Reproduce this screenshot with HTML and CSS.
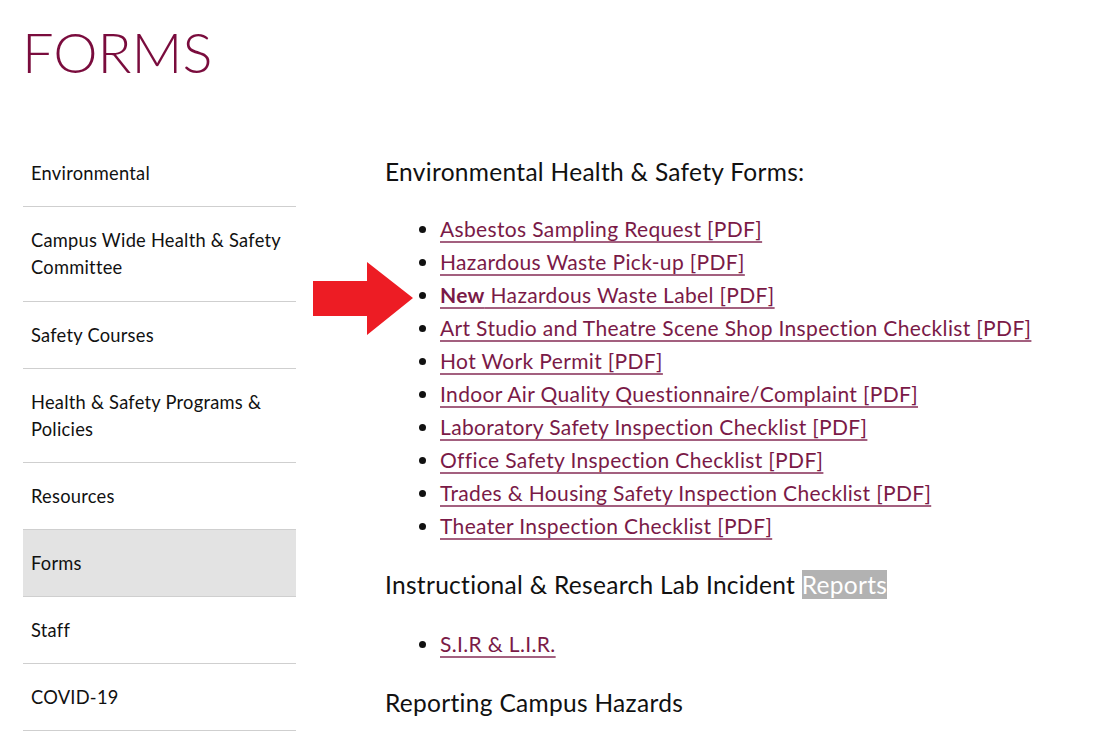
FILE: index.html
```html
<!DOCTYPE html>
<html lang="en">
<head>
<meta charset="utf-8">
<title>Forms</title>
<link rel="stylesheet" href="styles.css">
</head>
<body>
<div class="page">
  <h1 class="title">FORMS</h1>
  <div class="layout">
    <nav class="sidebar">
      <a class="nav-item" href="#">Environmental</a>
      <a class="nav-item two" href="#">Campus Wide Health &amp; Safety Committee</a>
      <a class="nav-item" href="#">Safety Courses</a>
      <a class="nav-item" href="#">Health &amp; Safety Programs &amp; Policies</a>
      <a class="nav-item" href="#">Resources</a>
      <a class="nav-item active" href="#">Forms</a>
      <a class="nav-item" href="#">Staff</a>
      <a class="nav-item" href="#">COVID-19</a>
    </nav>
    <main class="content">
      <h2 class="section-title first">Environmental Health &amp; Safety Forms:</h2>
      <ul class="links first-list">
        <li><a href="#">Asbestos Sampling Request [PDF]</a></li>
        <li><a href="#">Hazardous Waste Pick-up [PDF]</a></li>
        <li class="marked">
          <svg class="arrow" width="100" height="74" viewBox="0 0 100 74"><polygon points="0,19 54,19 54,0 100,36 54,73 54,54 0,54" fill="#ed1c24"/></svg>
          <a href="#"><strong>New</strong> Hazardous Waste Label [PDF]</a>
        </li>
        <li><a href="#">Art Studio and Theatre Scene Shop Inspection Checklist [PDF]</a></li>
        <li><a href="#">Hot Work Permit [PDF]</a></li>
        <li><a href="#">Indoor Air Quality Questionnaire/Complaint [PDF]</a></li>
        <li><a href="#">Laboratory Safety Inspection Checklist [PDF]</a></li>
        <li><a href="#">Office Safety Inspection Checklist [PDF]</a></li>
        <li><a href="#">Trades &amp; Housing Safety Inspection Checklist [PDF]</a></li>
        <li><a href="#">Theater Inspection Checklist [PDF]</a></li>
      </ul>
      <h2 class="section-title">Instructional &amp; Research Lab Incident <span class="sel">Reports</span></h2>
      <ul class="links">
        <li><a href="#">S.I.R &amp; L.I.R.</a></li>
      </ul>
      <h2 class="section-title">Reporting Campus Hazards</h2>
    </main>
  </div>
</div>
</body>
</html>
```
FILE: styles.css
```css
* { box-sizing: border-box; }
html, body { margin: 0; padding: 0; background: #fff; }
body {
  font-family: Lato, "Liberation Sans", sans-serif;
  color: #111;
  overflow: hidden;
}
.page { padding: 0 0 0 23px; }
.title {
  margin: 0 0 0 -1px;
  padding-top: 20px;
  font-size: 56px;
  line-height: 64px;
  font-weight: 300;
  color: #7a0c3d;
  letter-spacing: 0;
}
.layout {
  display: flex;
  margin-top: 56px;
}
.sidebar {
  width: 273px;
  flex: none;
  display: flex;
  flex-direction: column;
}
.nav-item {
  display: block;
  padding: 20px 8px 19px;
  font-size: 18.3px;
  letter-spacing: 0.25px;
  line-height: 27px;
  color: #111;
  text-decoration: none;
  border-bottom: 1px solid #cfcfcf;
}
.nav-item.two { padding-bottom: 20px; }
.nav-item.active { background: #e3e3e3; }
.content {
  margin-left: 89px;
  flex: 1;
}
.section-title {
  margin: 0;
  font-size: 24.5px;
  letter-spacing: 0.3px;
  line-height: 32px;
  font-weight: 400;
  color: #111;
}
.section-title.first { margin-top: 16px; }
.sel { background: #b2b2b2; color: #fff; }
.links {
  margin: 26px 0 27px;
  padding-left: 55px;
  list-style: disc;
}
.links.first-list { margin-top: 24px; }
.links li {
  font-size: 21px;
  letter-spacing: 0.35px;
  line-height: 33px;
  position: relative;
}
.links a {
  color: #7a1a47;
  text-decoration: underline;
  text-decoration-color: #a3607f;
  text-decoration-thickness: 2px;
  text-underline-offset: 4px;
}
.links strong { font-weight: 700; }
.arrow {
  position: absolute;
  left: -127px;
  top: -16px;
}
```
